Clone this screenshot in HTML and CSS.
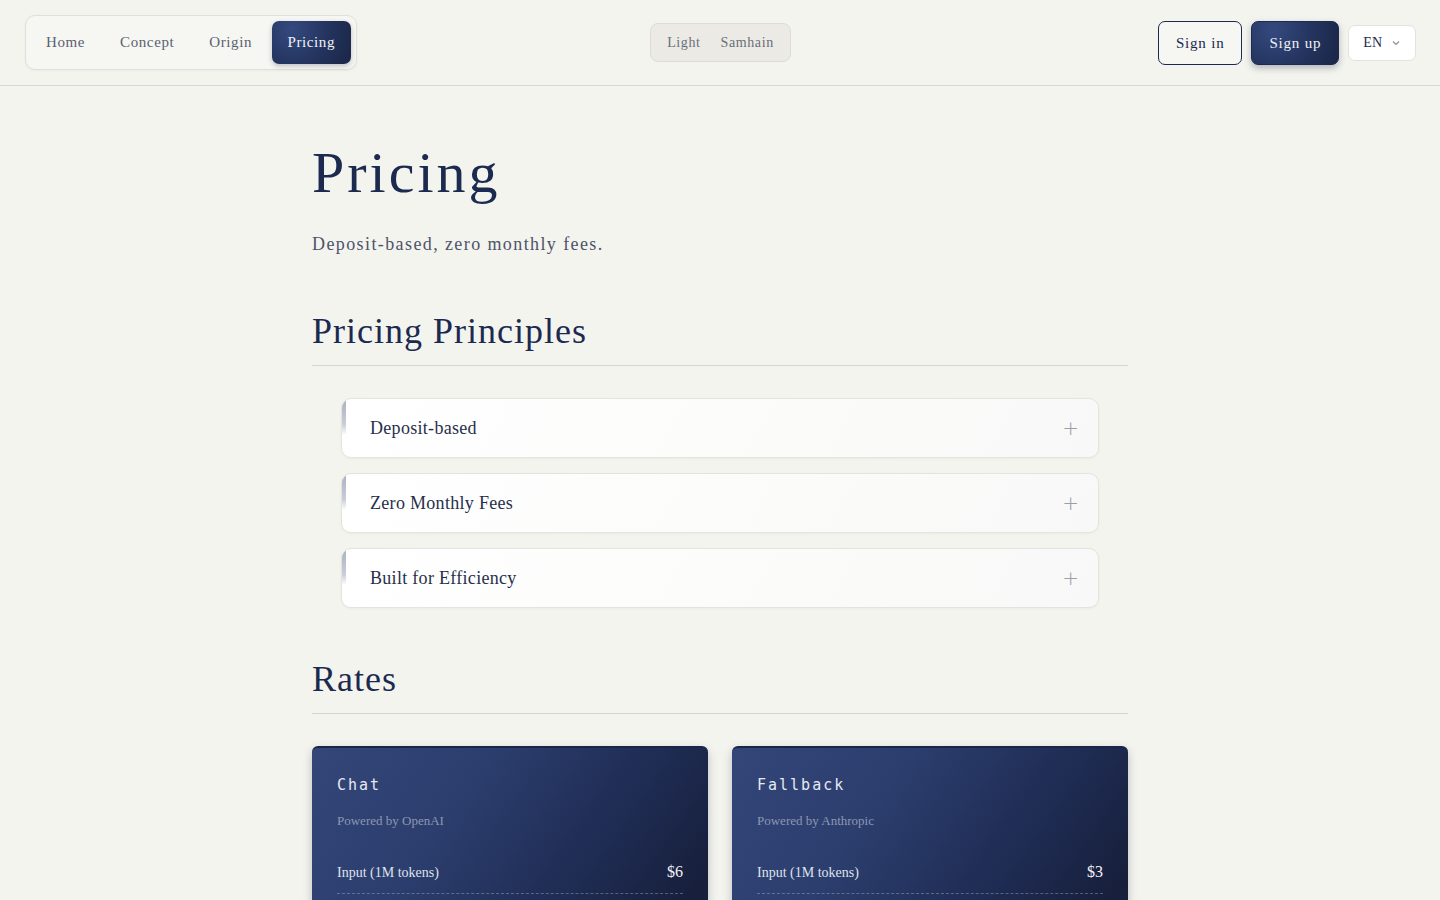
FILE: index.html
```html
<!DOCTYPE html>
<html lang="en">
<head>
<meta charset="utf-8">
<title>Pricing</title>
<link rel="stylesheet" href="styles.css">
</head>
<body>
<header class="topbar">
  <nav class="nav">
    <a class="nav-item">Home</a>
    <a class="nav-item">Concept</a>
    <a class="nav-item">Origin</a>
    <a class="nav-item active">Pricing</a>
  </nav>
  <div class="theme">
    <span class="theme-item">Light</span>
    <span class="theme-item">Samhain</span>
  </div>
  <div class="actions">
    <a class="btn btn-outline">Sign in</a>
    <a class="btn btn-solid">Sign up</a>
    <div class="lang">EN
      <svg class="chev" width="10" height="10" viewBox="0 0 10 10"><path d="M2 3.5 L5 6.5 L8 3.5" fill="none" stroke="#8a8f9c" stroke-width="1.2"/></svg>
    </div>
  </div>
</header>

<main class="main">
  <h1 class="title">Pricing</h1>
  <p class="subtitle">Deposit-based, zero monthly fees.</p>

  <h2 class="section-title">Pricing Principles</h2>
  <div class="accordion">
    <div class="acc-item"><span class="acc-label">Deposit-based</span><span class="acc-plus">+</span></div>
    <div class="acc-item"><span class="acc-label">Zero Monthly Fees</span><span class="acc-plus">+</span></div>
    <div class="acc-item"><span class="acc-label">Built for Efficiency</span><span class="acc-plus">+</span></div>
  </div>

  <h2 class="section-title rates-title">Rates</h2>
  <div class="cards">
    <div class="card">
      <div class="card-name">Chat</div>
      <div class="card-by">Powered by OpenAI</div>
      <div class="card-row"><span>Input (1M tokens)</span><span class="price">$6</span></div>
      <div class="card-row"><span>Output (1M tokens)</span><span class="price">$24</span></div>
    </div>
    <div class="card">
      <div class="card-name">Fallback</div>
      <div class="card-by">Powered by Anthropic</div>
      <div class="card-row"><span>Input (1M tokens)</span><span class="price">$3</span></div>
      <div class="card-row"><span>Output (1M tokens)</span><span class="price">$15</span></div>
    </div>
  </div>
</main>
</body>
</html>
```

FILE: styles.css
```css
* { box-sizing: border-box; }
html, body { margin: 0; padding: 0; }
body {
  background: #f4f4ef;
  font-family: "Liberation Serif", "DejaVu Serif", serif;
  color: #1c2a4f;
}
a { text-decoration: none; color: inherit; }

.topbar {
  height: 86px;
  display: grid;
  grid-template-columns: 1fr auto 1fr;
  align-items: center;
  padding: 0 24px 0 25px;
  border-bottom: 1px solid #d9d9d2;
}
.nav {
  justify-self: start;
  display: flex;
  align-items: center;
  padding: 5px;
  background: #f6f6f2;
  border: 1px solid #e0e0da;
  border-radius: 10px;
  box-shadow: 0 1px 3px rgba(0,0,0,0.04);
}
.nav-item {
  font-size: 15px;
  letter-spacing: 0.6px;
  color: #5b6070;
  padding: 0 17.5px;
  height: 43px;
  line-height: 43px;
  border-radius: 7px;
}
.nav-item:first-child { padding-left: 15px; }
.nav-item.active {
  background: radial-gradient(circle at 25% 20%, #34497e 0%, #23335d 55%, #1a2647 100%);
  color: #f1f2f6;
  box-shadow: 0 2px 5px rgba(20,30,60,0.25);
  margin-left: 2px;
  padding: 0 16px;
}
.theme {
  display: flex;
  align-items: center;
  height: 39px;
  padding: 0 6px;
  background: #ebeae4;
  border: 1px solid #dddcd5;
  border-radius: 8px;
}
.theme-item {
  font-size: 14px;
  letter-spacing: 0.6px;
  color: #6a6e7a;
  padding: 0 10px;
}
.actions {
  justify-self: end;
  display: flex;
  align-items: center;
  gap: 9px;
}
.btn {
  height: 44px;
  line-height: 42px;
  padding: 0 17px;
  font-size: 15px;
  letter-spacing: 0.8px;
  border-radius: 7px;
}
.btn-outline {
  border: 1px solid #1c2a4f;
  color: #1c2a4f;
  background: #f6f6f2;
}
.btn-solid {
  border: 1px solid #1d2a50;
  color: #f1f2f6;
  background: radial-gradient(circle at 25% 20%, #34497e 0%, #23335d 55%, #1a2647 100%);
  box-shadow: 0 3px 7px rgba(20,30,60,0.3);
}
.lang {
  display: flex;
  align-items: center;
  gap: 9px;
  height: 36px;
  padding: 0 14px;
  background: #ffffff;
  border: 1px solid #e3e3dd;
  border-radius: 7px;
  font-size: 14px;
  color: #1c2a4f;
}
.chev { display: block; }

.main {
  width: 816px;
  margin: 0 auto;
  padding-top: 52px;
}
.title {
  font-weight: normal;
  font-size: 58px;
  letter-spacing: 3px;
  line-height: 70px;
  margin: 0;
  color: #1c2a4f;
}
.subtitle {
  margin: 24px 0 0;
  font-size: 18px;
  letter-spacing: 1.4px;
  color: #4d5368;
  line-height: 24px;
}
.section-title {
  font-weight: normal;
  font-size: 36px;
  letter-spacing: 1px;
  line-height: 46px;
  margin: 52px 0 0;
  padding-bottom: 11px;
  border-bottom: 1px solid #d6d6d0;
  color: #1c2a4f;
}
.accordion {
  display: flex;
  flex-direction: column;
  gap: 15px;
  padding: 32px 29px 0;
}
.acc-item {
  position: relative;
  height: 60px;
  display: flex;
  align-items: center;
  justify-content: space-between;
  padding: 0 19px 0 28px;
  background: linear-gradient(120deg, #ffffff 0%, #fbfbfa 60%, #f8f8f8 100%);
  border: 1px solid #e4e4df;
  border-radius: 10px;
  box-shadow: 0 1px 3px rgba(0,0,0,0.04);
  overflow: hidden;
}
.acc-item::before {
  content: "";
  position: absolute;
  left: 0;
  top: 0;
  width: 4px;
  height: 36px;
  background: linear-gradient(180deg, #a9b0c4 0%, #c9cdd8 70%, rgba(255,255,255,0) 100%);
}
.acc-label {
  font-size: 18px;
  letter-spacing: 0.3px;
  color: #27304a;
}
.acc-plus {
  font-family: "DejaVu Sans", sans-serif;
  font-weight: 200;
  font-size: 20px;
  color: #9a9ea8;
}
.rates-title { margin-top: 48px; }
.cards {
  display: grid;
  grid-template-columns: 1fr 1fr;
  gap: 24px;
  margin-top: 32px;
}
.card {
  height: 300px;
  border-radius: 6px;
  padding: 27px 25px;
  color: #eef0f5;
  background: linear-gradient(125deg, #334678 0%, #2c3e6e 30%, #1e2b52 60%, #171f3b 80%, #1c2750 100%);
  border-top: 2px solid #1a2547;
  box-shadow: 0 4px 10px rgba(20,30,60,0.25);
}
.card-name {
  font-family: "DejaVu Sans Mono", "Liberation Mono", monospace;
  font-size: 15px;
  letter-spacing: 2px;
  color: #e6e9f2;
  line-height: 20px;
}
.card-by {
  margin-top: 17px;
  font-size: 13px;
  color: #8d97b3;
  line-height: 18px;
}
.card-row {
  margin-top: 33px;
  display: flex;
  justify-content: space-between;
  align-items: baseline;
  padding-bottom: 12px;
  border-bottom: 1px dashed rgba(200,210,230,0.35);
  font-size: 14px;
  color: #dfe3ee;
}
.card-row + .card-row { margin-top: 14px; }
.price { font-size: 16px; color: #f3f4f8; }
```
